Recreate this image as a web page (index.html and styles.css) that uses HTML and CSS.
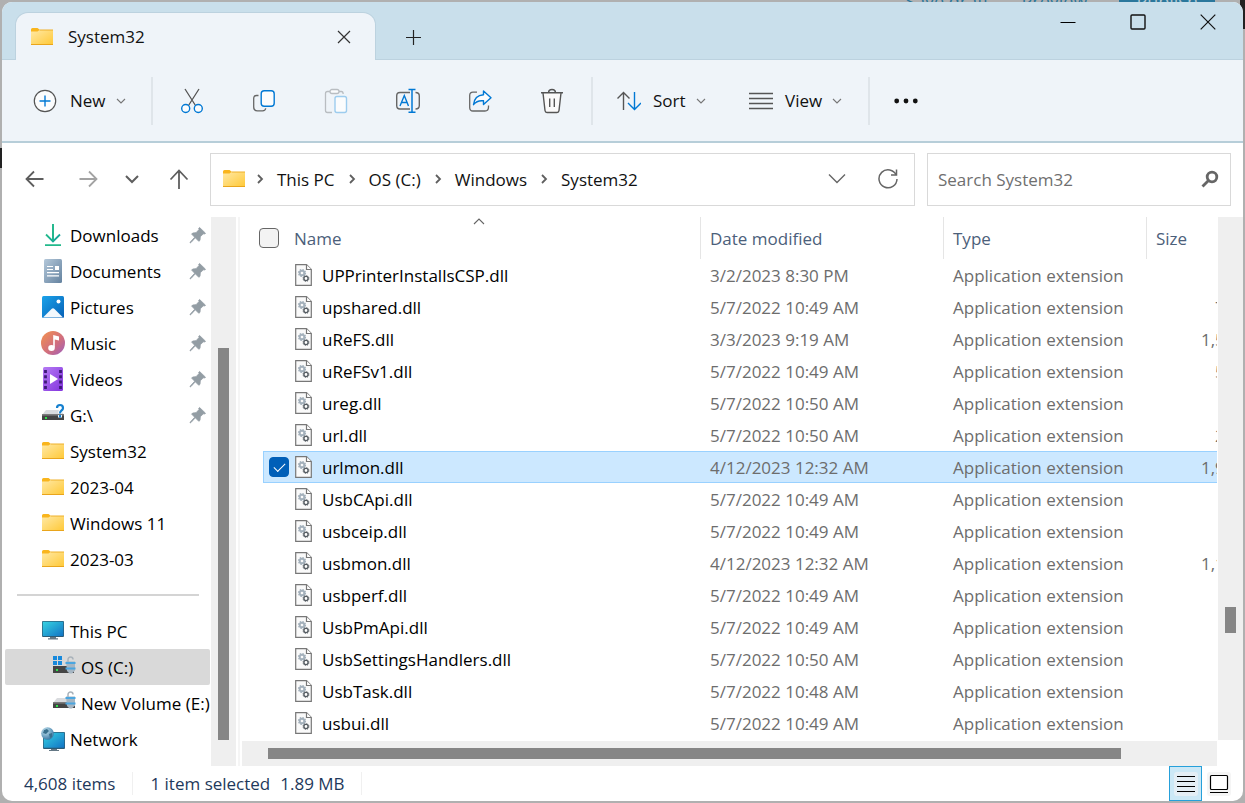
FILE: index.html
```
<!DOCTYPE html>
<html lang="en">

<head>
    <meta charset="UTF-8">
    <meta name="viewport" content="width=device-width, initial-scale=1.0">
    <title>System32</title>
    <link rel="stylesheet" href="styles.css">
</head>

<body>
    <!-- shared icons -->
    <svg class="sprite" width="0" height="0" aria-hidden="true">
        <defs>
            <linearGradient id="gFolder" x1="0" y1="0" x2="1" y2="1">
                <stop offset="0" stop-color="#ffe9a6" />
                <stop offset="1" stop-color="#ffc938" />
            </linearGradient>
            <linearGradient id="gScreen" x1="0" y1="0" x2="1" y2="1">
                <stop offset="0" stop-color="#36d3e2" />
                <stop offset="1" stop-color="#1173c4" />
            </linearGradient>
            <linearGradient id="gDown" x1="0" y1="0" x2="1" y2="1">
                <stop offset="0" stop-color="#2fc981" />
                <stop offset="1" stop-color="#0f9fa0" />
            </linearGradient>
            <linearGradient id="gDoc" x1="0" y1="0" x2="1" y2="1">
                <stop offset="0" stop-color="#b4c8da" />
                <stop offset="1" stop-color="#64829f" />
            </linearGradient>
            <linearGradient id="gPic" x1="0" y1="0" x2="1" y2="1">
                <stop offset="0" stop-color="#1ba3ea" />
                <stop offset="1" stop-color="#0660b6" />
            </linearGradient>
            <linearGradient id="gMusic" x1="0" y1="0" x2="1" y2="1">
                <stop offset="0.1" stop-color="#ee8c55" />
                <stop offset="0.6" stop-color="#cf6d80" />
                <stop offset="1" stop-color="#9c60c0" />
            </linearGradient>
            <linearGradient id="gVideo" x1="0" y1="0" x2="1" y2="1">
                <stop offset="0" stop-color="#b57bf4" />
                <stop offset="1" stop-color="#8334dd" />
            </linearGradient>
            <radialGradient id="gGlobe" cx="0.35" cy="0.3" r="0.8">
                <stop offset="0" stop-color="#c6e6f2" />
                <stop offset="1" stop-color="#2c6d9c" />
            </radialGradient>
        </defs>
        <symbol id="folder" viewBox="0 0 24 20">
            <path d="M1 2.500Q1 1 2.500 1H7.500L9.500 2.500V6H1z" fill="#f9b51d" />
            <path d="M1 4.500H7.500L9.500 3H23V17.500H1z" fill="url(#gFolder)" />
            <path d="M9.500 3H23" stroke="#eeb02a" />
            <path d="M1 17.500H23" stroke="#e9a51c" />
        </symbol>
        <symbol id="pin" viewBox="0 0 18 18">
            <path d="M10.600 1.500L16.500 7.200L15.600 8.100L14.300 7.800L11.300 10.800L11 14.300L9.800 15.300L6.300 11.800L2 16.500L1 17L1.400 15.900L5.700 11.200L2.600 8.100L3.700 7L7 6.700L10 3.600L9.700 2.300z" fill="#939da4" stroke="#939da4" stroke-width=".8" />
        </symbol>
        <symbol id="down" viewBox="0 0 12 12">
            <path d="M2 4L6 8L10 4" fill="none" stroke="#777" stroke-width="1.100" />
        </symbol>
        <symbol id="crumb" viewBox="0 0 10 12">
            <path d="M3 2L7 6L3 10" fill="none" stroke="#5f5f5f" stroke-width="1.800" />
        </symbol>
        <symbol id="dll" viewBox="0 0 17 22">
            <path d="M.7.7H11.500L16.300 5.500V21.300H.7z" fill="#fafafa" stroke="#777" stroke-width="1.200" />
            <path d="M11.500.7V5.500H16.300" fill="#fff" stroke="#777" stroke-width="1.200" />
            <circle cx="7" cy="9" r="2.300" fill="none" stroke="#a3b0bb" stroke-width="1.900" />
            <circle cx="7" cy="9" r="3.500" fill="none" stroke="#a3b0bb" stroke-width="1.200" stroke-dasharray="1.500 1.250" />
            <circle cx="11" cy="14.500" r="2.100" fill="#fff" stroke="#545b61" stroke-width="1.400" />
            <circle cx="11" cy="14.500" r="3" fill="none" stroke="#545b61" stroke-width=".8" stroke-dasharray="1.200 1.150" />
        </symbol>
        <symbol id="drive" viewBox="0 0 24 10">
            <path d="M5 0H20L23 5H1z" fill="#d9dbde" />
            <path d="M1 4.500H23V10H1z" fill="#444" />
            <path d="M1 4.500H23V6H1z" fill="#666" />
            <rect x="4" y="7" width="2" height="2" fill="#2fe04b" />
        </symbol>
        <symbol id="lock" viewBox="0 0 11 18">
            <path d="M3 6V3.500A2.500 2.500 0 0 1 8 3.500" fill="none" stroke="#aab3bb" stroke-width="1.500" />
            <path d="M1 5.500H10V14.500L7 17.500H4.500L2 15z" fill="#a5b5c2" />
            <path d="M.5 6H10.500V8H.5zM.5 11.500H10.500V13.500H.5z" fill="#4ba6e0" />
        </symbol>
    </svg>

    <div class="behind" aria-hidden="true">
        <span>Save draft</span>
        <span>Preview</span>
        <span class="behind-publish">Publish</span>
    </div>

    <div class="window">
        <header class="titlebar">
            <div class="tab">
                <svg class="folder"><use href="#folder" /></svg>
                <span class="tab-title">System32</span>
                <button class="tab-close" aria-label="Close tab">
                    <svg width="14" height="14" viewBox="0 0 14 14"><path d="M1 1L13 13M13 1L1 13" fill="none" stroke="#333" stroke-width="1.200" /></svg>
                </button>
            </div>
            <button class="tab-new" aria-label="New tab">
                <svg width="15" height="15" viewBox="0 0 15 15"><path d="M7.500 0V15M0 7.500H15" stroke="#222" stroke-width="1.200" /></svg>
            </button>
            <div class="caption">
                <button aria-label="Minimize">
                    <svg width="16" height="16" viewBox="0 0 16 16"><path d="M.5 8.500H15.500" stroke="#000" /></svg>
                </button>
                <button aria-label="Maximize">
                    <svg width="16" height="16" viewBox="0 0 16 16"><rect x="1" y="1" width="14" height="14" rx="1" fill="none" stroke="#111" stroke-width="1.400" /></svg>
                </button>
                <button aria-label="Close">
                    <svg width="16" height="16" viewBox="0 0 16 16"><path d="M.7.7L15.300 15.300M15.300.7L.7 15.300" stroke="#111" stroke-width="1.200" /></svg>
                </button>
            </div>
        </header>

        <div class="toolbar">
            <button class="tool-new">
                <svg width="24" height="24" viewBox="0 0 24 24" fill="none">
                    <circle cx="12" cy="12" r="10.700" fill="#fbfcfd" stroke="#555" stroke-width="1.200" />
                    <path d="M12 6.500V17.500M6.500 12H17.500" stroke="#0078d4" stroke-width="1.400" />
                </svg>
                <span>New</span>
                <svg class="chev"><use href="#down" /></svg>
            </button>
            <i class="sep"></i>
            <button class="tool" aria-label="Cut">
                <svg width="24" height="26" viewBox="0 0 24 26" fill="none">
                    <path d="M5 1L15.500 17.500M19 1L8.500 17.500" stroke="#555" stroke-width="1.300" />
                    <circle cx="5.700" cy="20.500" r="4" fill="#fbfcfd" stroke="#0078d4" stroke-width="1.400" />
                    <circle cx="18.300" cy="20.500" r="4" fill="#fbfcfd" stroke="#0078d4" stroke-width="1.400" />
                </svg>
            </button>
            <button class="tool" aria-label="Copy">
                <svg width="24" height="24" viewBox="0 0 24 24" fill="none">
                    <path d="M6.500 6.500H4.500Q1.700 6.500 1.700 9.500V18Q1.700 21.800 5.500 21.800H10.500Q13.500 21.800 13.700 19.300" stroke="#666" stroke-width="1.300" />
                    <rect x="9.200" y="1.700" width="13" height="15.500" rx="3" fill="#fbfcfd" stroke="#0078d4" stroke-width="1.400" />
                </svg>
            </button>
            <button class="tool" aria-label="Paste" disabled>
                <svg width="24" height="26" viewBox="0 0 24 26" fill="none">
                    <path d="M6 3.500H3.500Q1.500 3.500 1.500 5.500V22.500Q1.500 24.500 3.500 24.500H8M15 3.500H17.500Q19 3.500 19.200 6" stroke="#b9bdc1" stroke-width="1.300" />
                    <rect x="6" y="1.500" width="9" height="4" rx="2" fill="#fbfcfd" stroke="#b9bdc1" stroke-width="1.300" />
                    <rect x="11" y="8.500" width="11.500" height="16" rx="2" fill="#fbfcfd" stroke="#9dccee" stroke-width="1.400" />
                </svg>
            </button>
            <button class="tool" aria-label="Rename">
                <svg width="26" height="26" viewBox="0 0 26 26" fill="none">
                    <path d="M15 4.500H5Q1.700 4.500 1.700 8V17.500Q1.700 21 5 21H15M20.500 4.500Q24.300 4.500 24.300 8V17.500Q24.300 21 20.500 21" stroke="#666" stroke-width="1.400" />
                    <path d="M5 18L9.300 7.500L13.500 18M6.500 14.500H12" stroke="#0078d4" stroke-width="1.400" />
                    <path d="M17 2V23.500M13.500 1.500H20.500M13.500 24.300H20.500" stroke="#0078d4" stroke-width="1.500" />
                </svg>
            </button>
            <button class="tool" aria-label="Share">
                <svg width="24" height="24" viewBox="0 0 24 24" fill="none">
                    <path d="M9 3.200H5Q1.700 3.200 1.700 6.500V18.500Q1.700 22 5 22H17Q20.500 22 20.500 18V16.500" stroke="#666" stroke-width="1.300" />
                    <path d="M15.500 2L23 8.700L15.500 15.500V11.800Q9 11 5.500 15.700Q6.500 6.300 15.500 5.700z" fill="#fbfcfd" stroke="#0078d4" stroke-width="1.400" stroke-linejoin="round" />
                </svg>
            </button>
            <button class="tool" aria-label="Delete">
                <svg width="24" height="26" viewBox="0 0 24 26" fill="none">
                    <path d="M3 5L5 22.500Q5.200 24.500 7 24.500H17Q18.800 24.500 19 22.500L21 5" fill="#fbfafa" stroke="#555" stroke-width="1.400" />
                    <path d="M1 4.700H23M8.500 4.500Q8.700 1.500 12 1.500Q15.300 1.500 15.500 4.500M9.700 10.500V19M14.300 10.500V19" stroke="#555" stroke-width="1.400" />
                </svg>
            </button>
            <i class="sep"></i>
            <button class="tool-text tool-sort">
                <svg width="24" height="20" viewBox="0 0 24 20" fill="none">
                    <path d="M6.500 19V1.500M.5 7.500L6.500 1.500L12.500 7.500" stroke="#555" stroke-width="1.400" />
                    <path d="M17.500 1V18.500M11 12L17.500 18.500L24 12" stroke="#0078d4" stroke-width="1.400" />
                </svg>
                <span>Sort</span>
                <svg class="chev"><use href="#down" /></svg>
            </button>
            <button class="tool-text tool-view">
                <svg width="24" height="18" viewBox="0 0 24 18"><path d="M0 1.500H24M0 6.500H24M0 11.500H24M0 16.500H24" stroke="#555" stroke-width="1.400" /></svg>
                <span>View</span>
                <svg class="chev"><use href="#down" /></svg>
            </button>
            <i class="sep"></i>
            <button class="tool" aria-label="See more">
                <svg width="24" height="6" viewBox="0 0 24 6" fill="#111">
                    <circle cx="2.700" cy="3" r="2.400" />
                    <circle cx="12" cy="3" r="2.400" />
                    <circle cx="21.300" cy="3" r="2.400" />
                </svg>
            </button>
        </div>

        <div class="navrow">
            <button class="nav-wide" aria-label="Back">
                <svg width="20" height="18" viewBox="0 0 20 18" fill="none"><path d="M18.500 9H1.500M9 1.500L1.500 9L9 16.500" stroke="#5e5e5e" stroke-width="1.800" /></svg>
            </button>
            <button class="nav-wide" aria-label="Forward">
                <svg width="20" height="18" viewBox="0 0 20 18" fill="none"><path d="M1.500 9H18.500M11 1.500L18.500 9L11 16.500" stroke="#a3a3a3" stroke-width="1.800" /></svg>
            </button>
            <button class="nav-recent" aria-label="Recent locations">
                <svg width="14" height="10" viewBox="0 0 14 10" fill="none"><path d="M1 2L7 8L13 2" stroke="#5e5e5e" stroke-width="2" /></svg>
            </button>
            <button class="nav-up" aria-label="Up">
                <svg width="20" height="20" viewBox="0 0 20 20" fill="none"><path d="M10 20V1.500M1.500 10.500L10 1.500L18.500 10.500" stroke="#5e5e5e" stroke-width="1.800" /></svg>
            </button>
            <nav class="address">
                <svg class="folder"><use href="#folder" /></svg>
                <svg class="crumb"><use href="#crumb" /></svg>
                <a href="#">This PC</a>
                <svg class="crumb"><use href="#crumb" /></svg>
                <a href="#">OS (C:)</a>
                <svg class="crumb"><use href="#crumb" /></svg>
                <a href="#">Windows</a>
                <svg class="crumb"><use href="#crumb" /></svg>
                <a href="#">System32</a>
                <button class="addr-btn addr-history" aria-label="Previous locations">
                    <svg width="18" height="12" viewBox="0 0 18 12" fill="none"><path d="M1 1.500L9 9.500L17 1.500" stroke="#666" stroke-width="1.400" /></svg>
                </button>
                <button class="addr-btn" aria-label="Refresh">
                    <svg width="20" height="20" viewBox="0 0 20 20" fill="none"><path d="M18.300 6.300A9 9 0 1 0 19 10M18.500 .5V6H13" stroke="#666" stroke-width="1.500" /></svg>
                </button>
            </nav>
            <div class="search">
                <input type="search" placeholder="Search System32" aria-label="Search System32">
                <svg width="18" height="18" viewBox="0 0 18 18" fill="none">
                    <circle cx="11" cy="7" r="4.800" stroke="#666" stroke-width="2.800" />
                    <path d="M7.500 10.500L1.500 16.500" stroke="#666" stroke-width="2.800" />
                </svg>
            </div>
        </div>

        <div class="content">
            <nav class="sidebar">
                <ul>
                    <li><a href="#">
                            <svg width="24" height="24" viewBox="0 0 24 24" fill="none">
                                <path d="M12 1V18M5 11.500L12 18.500L19 11.500" stroke="url(#gDown)" stroke-width="1.800" />
                                <path d="M11.200 1H12.800V18H11.200z" fill="#20b68c" />
                                <path d="M4 22.200H20" stroke="#22b98b" stroke-width="1.800" />
                            </svg>Downloads</a><svg class="pin"><use href="#pin" /></svg></li>
                    <li><a href="#">
                            <svg width="24" height="24" viewBox="0 0 24 24">
                                <rect x="3" y="0" width="18" height="24" rx="1.500" fill="url(#gDoc)" />
                                <path d="M6 7.500H12M6 10.500H12M6 13.700H18M6 16.800H18" stroke="#fff" stroke-width="1.200" />
                                <rect x="14" y="7" width="4" height="4" fill="#fff" />
                            </svg>Documents</a><svg class="pin"><use href="#pin" /></svg></li>
                    <li><a href="#">
                            <svg width="24" height="24" viewBox="0 0 24 24">
                                <rect x="1" y="1" width="22" height="22" rx="1.500" fill="url(#gPic)" />
                                <path d="M2 22.500L10.500 14Q12 12.600 13.500 14L22 22.500z" fill="#f2f8fd" />
                                <circle cx="17.500" cy="6.500" r="2" fill="#fff" />
                            </svg>Pictures</a><svg class="pin"><use href="#pin" /></svg></li>
                    <li><a href="#">
                            <svg width="24" height="24" viewBox="0 0 24 24">
                                <circle cx="12" cy="12" r="12" fill="url(#gMusic)" />
                                <path d="M12.200 4L18 5.500V9.500L13.800 8.500V16.500H12.200z" fill="#fff" />
                                <ellipse cx="10.500" cy="17" rx="3.300" ry="3" fill="#fff" />
                            </svg>Music</a><svg class="pin"><use href="#pin" /></svg></li>
                    <li><a href="#">
                            <svg width="24" height="24" viewBox="0 0 24 24">
                                <rect x="2" y="0" width="20" height="24" rx="1.500" fill="url(#gVideo)" />
                                <path d="M4.500 3V22M19.500 3V22" stroke="#3d1a78" stroke-width="2.800" stroke-dasharray="3 2.300" />
                                <path d="M9 7L17 12L9 17z" fill="#fff" />
                            </svg>Videos</a><svg class="pin"><use href="#pin" /></svg></li>
                    <li><a href="#">
                            <svg width="24" height="24" viewBox="0 0 24 24" fill="none">
                                <use href="#drive" y="7" width="24" height="10" />
                                <path d="M16 5Q16 2 19 2Q22 2 22 5Q22 6.500 20.500 7.500Q19 8.500 19 10.500M19 12V14.500" stroke="#fff" stroke-width="4" />
                                <path d="M16 5Q16 2 19 2Q22 2 22 5Q22 6.500 20.500 7.500Q19 8.500 19 10.500M19 12V14.500" stroke="#1580cf" stroke-width="2.200" />
                            </svg>G:\</a><svg class="pin"><use href="#pin" /></svg></li>
                    <li><a href="#"><svg class="folder"><use href="#folder" /></svg>System32</a></li>
                    <li><a href="#"><svg class="folder"><use href="#folder" /></svg>2023-04</a></li>
                    <li><a href="#"><svg class="folder"><use href="#folder" /></svg>Windows 11</a></li>
                    <li><a href="#"><svg class="folder"><use href="#folder" /></svg>2023-03</a></li>
                </ul>
                <hr>
                <ul>
                    <li><a href="#">
                            <svg width="24" height="24" viewBox="0 0 24 24">
                                <rect x="1" y="2" width="22" height="16" rx="1" fill="#2c5b75" />
                                <rect x="1.700" y="2.700" width="20.600" height="14.300" fill="url(#gScreen)" />
                                <path d="M9 18H15V19.200H17V20.500H7V19.200H9z" fill="#657885" />
                            </svg>This PC</a></li>
                    <li class="child selected"><a href="#">
                            <svg width="24" height="24" viewBox="0 0 24 24">
                                <path d="M1 1H5V5H1zM6 1H10V5H6zM1 6H5V10H1zM6 6H10V10H6z" fill="#1789dc" />
                                <path d="M1 11H22V18H1z" fill="#454545" />
                                <rect x="4" y="14" width="2" height="2" fill="#2fe04b" />
                                <use href="#lock" x="13" y="1" width="11" height="18" />
                            </svg>OS (C:)</a></li>
                    <li class="child"><a href="#">
                            <svg width="24" height="24" viewBox="0 0 24 24">
                                <use href="#drive" y="7" width="24" height="10" />
                                <use href="#lock" x="13" y="0" width="11" height="18" />
                            </svg>New Volume (E:)</a></li>
                    <li><a href="#">
                            <svg width="24" height="24" viewBox="0 0 24 24">
                                <rect x="2" y="5" width="22" height="17" rx="1" fill="#2c5b75" />
                                <rect x="2.700" y="5.700" width="20.600" height="15" fill="url(#gScreen)" />
                                <path d="M10 22H16V23H18V24H8V23H10z" fill="#657885" />
                                <circle cx="6.500" cy="6.500" r="6.300" fill="url(#gGlobe)" />
                                <path d="M3 3L6 2L8 4L5 7L2 6zM8 7L11 6V10L9 11z" fill="#386f8c" />
                            </svg>Network</a></li>
                </ul>
            </nav>
            <div class="vscroll side-scroll"><div class="thumb"></div></div>
            <div class="splitter"></div>

            <main class="files">
                <div class="table-wrap">
                    <table>
                        <thead>
                            <tr>
                                <th class="c-name">
                                    <div class="cell">
                                        <input type="checkbox" class="check" aria-label="Select all">
                                        <span>Name</span>
                                    </div>
                                    <svg class="sort-mark" width="12" height="7" viewBox="0 0 12 7"><path d="M1 6L6 1L11 6" fill="none" stroke="#666" stroke-width="1.100" /></svg>
                                </th>
                                <th class="c-date">Date modified</th>
                                <th class="c-type">Type</th>
                                <th class="c-size">Size</th>
                            </tr>
                        </thead>
                        <tbody id="rows"></tbody>
                    </table>
                </div>
                <div class="hscroll"><div class="thumb"></div></div>
            </main>
            <div class="vscroll file-scroll"><div class="thumb"></div></div>
        </div>

        <footer class="status">
            <span class="count">4,608 items</span>
            <span class="picked">1 item selected</span>
            <span class="bytes">1.89 MB</span>
            <button class="mode active" aria-label="Details view">
                <svg width="24" height="24" viewBox="0 0 24 24"><rect width="24" height="24" rx="3" fill="#e4eef5" /><path d="M3 4.500H21M3 9.500H21M3 14.500H21M3 19.500H21" stroke="#000" /></svg>
            </button>
            <button class="mode" aria-label="Large icons view">
                <svg width="24" height="24" viewBox="0 0 24 24"><rect width="24" height="24" rx="3" fill="#f5f5f5" /><rect x="3.500" y="3.500" width="17" height="14" rx="1" fill="#fff" stroke="#000" stroke-width="1.200" /><path d="M3 20.500H21" stroke="#000" /></svg>
            </button>
        </footer>
    </div>

    <script src="files.js"></script>
</body>

</html>
```
FILE: styles.css
```
* {
    box-sizing: border-box;
}

body {
    margin: 0;
    height: 100vh;
    padding: 2px;
    font-family: "Open Sans", "Noto Sans", sans-serif;
    font-size: 17px;
    color: #111;
    background: linear-gradient(#222, #222) 0 148px / 2px 20px no-repeat,
        linear-gradient(#222, #222) 100% 0 / 5px 29px no-repeat,
        #b0b0b0;
}

.sprite {
    position: absolute;
}

/* strip of the page behind the window */
.behind {
    position: absolute;
    top: 0;
    left: 0;
    right: 30px;
    height: 2px;
    overflow: hidden;
    display: flex;
    justify-content: flex-end;
    gap: 32px;
    font-size: 18px;
    line-height: 2px;
    color: #2a779c;
}

.behind-publish {
    padding: 0 17px;
    color: #b7c8d0;
    background: #2a779c;
}

button {
    display: flex;
    align-items: center;
    justify-content: center;
    padding: 0;
    border: none;
    background: none;
    font: inherit;
    color: inherit;
}

a {
    color: inherit;
    text-decoration: none;
}

svg {
    flex: none;
}

.window {
    position: relative;
    display: flex;
    flex-direction: column;
    height: 100%;
    border-radius: 10px;
    overflow: hidden;
    background: #fff;
}

.folder {
    width: 24px;
    height: 20px;
}

/* title bar */
.titlebar {
    display: flex;
    height: 58px;
    padding-left: 14px;
    background: #c9dfeb;
    box-shadow: inset 0 -1px #bcd2df;
}

.tab {
    display: flex;
    align-items: center;
    width: 359px;
    margin-top: 11px;
    padding: 0 24px 0 14px;
    border-radius: 12px 12px 0 0;
    background: #eff4f9;
    box-shadow: 0 0 0 1px #bcd2df;
    clip-path: inset(-2px -2px 0 -2px);
}

.tab-title {
    flex: 1;
    margin-left: 14px;
    font-weight: 500;
}

.tab-new {
    width: 77px;
    padding-top: 12px;
}

.caption {
    display: flex;
    margin-left: auto;
    height: 40px;
}

.caption button {
    width: 70px;
}

/* toolbar */
.toolbar {
    display: flex;
    align-items: center;
    height: 83px;
    background: #eff4f9;
    border-bottom: 2px solid #b7ced9;
}

.tool-new {
    width: 149px;
    justify-content: flex-start;
    padding-left: 31px;
    gap: 13px;
}

.tool {
    width: 72px;
    height: 48px;
}

.tool-text {
    justify-content: flex-start;
    padding-left: 21px;
    gap: 12px;
}

.tool-sort {
    width: 132px;
}

.tool-view {
    width: 140px;
}

.tool-new .chev {
    margin-left: -4px;
}

.tool-text .chev {
    margin-left: -3px;
}

.chev {
    width: 12px;
    height: 12px;
}

.sep {
    width: 2px;
    height: 48px;
    margin: 0 3px 0 0;
    background: #dfe5ea;
}

.tool + .sep {
    margin-left: 3px;
}

.tool-view + .sep {
    margin-right: 0;
}

/* address row */
.navrow {
    display: flex;
    align-items: center;
    height: 72px;
    padding: 0 12px 0 6px;
}

.navrow > button {
    height: 40px;
}

.nav-wide {
    width: 53px;
}

.nav-recent {
    width: 36px;
}

.nav-up {
    width: 58px;
}

.address {
    flex: 1;
    display: flex;
    align-items: center;
    height: 53px;
    margin-left: 2px;
    padding: 0 11px;
    border: 1px solid #d9d9d9;
}

.crumb {
    width: 10px;
    height: 12px;
    margin: 0 12px;
}

.address .folder + .crumb {
    margin-left: 9px;
}

.addr-btn {
    width: 30px;
    height: 40px;
}

.addr-history {
    margin-left: auto;
    margin-right: 21px;
}

.search {
    display: flex;
    align-items: center;
    width: 304px;
    height: 53px;
    margin-left: 12px;
    padding: 0 11px 0 10px;
    border: 1px solid #d9d9d9;
}

.search input {
    flex: 1;
    min-width: 0;
    padding: 0;
    border: none;
    outline: none;
    background: none;
    font: inherit;
}

.search input::placeholder {
    color: #6f6f6f;
}

/* content */
.content {
    flex: 1;
    display: flex;
    min-height: 0;
    padding-top: 2px;
}

.sidebar {
    width: 209px;
    overflow: hidden;
    white-space: nowrap;
    color: #000;
}

.sidebar ul {
    margin: 0;
    padding: 0;
    list-style: none;
}

.sidebar li {
    display: flex;
    align-items: center;
    height: 36px;
    margin: 0 1px 0 3px;
    padding: 0 3px 0 36px;
    border-radius: 2px;
}

.sidebar li a {
    flex: 1;
    display: flex;
    align-items: center;
    gap: 5px;
}

.sidebar li.child {
    padding: 0 0 0 47px;
}

.sidebar li.selected {
    background: #d9d9d9;
}

.pin {
    width: 18px;
    height: 18px;
}

.sidebar hr {
    height: 2px;
    margin: 17px 12px 17px 15px;
    border: none;
    background: #d4d4d4;
}

.vscroll {
    width: 25px;
    padding: 0 7px;
    background: #efefef;
}

.thumb {
    background: #868686;
}

.side-scroll .thumb {
    height: 392px;
    margin-top: 131px;
}

.file-scroll {
    margin-bottom: 26px;
}

.file-scroll .thumb {
    height: 26px;
    margin-top: 390px;
}

.splitter {
    width: 2px;
    margin: 0 2px;
    background: #f5f5f5;
}

.files {
    flex: 1;
    min-width: 0;
    display: flex;
    flex-direction: column;
    margin-right: 1px;
}

.table-wrap {
    flex: 1;
    min-height: 0;
    overflow: hidden;
    padding-left: 21px;
}

table {
    table-layout: fixed;
    width: 1017px;
    border-spacing: 0;
    white-space: nowrap;
}

th {
    position: relative;
    height: 42px;
    padding: 0 9px;
    text-align: left;
    font-weight: 400;
    color: #4c607a;
    border-left: 1px solid #e5e5e5;
}

th.c-name {
    width: 437px;
    padding: 0;
    border: none;
}

.c-date {
    width: 243px;
}

.c-type {
    width: 203px;
}

.cell {
    display: flex;
    align-items: center;
}

th .cell {
    gap: 15px;
    margin-left: -4px;
}

.sort-mark {
    position: absolute;
    top: 1px;
    left: 210px;
}

td {
    height: 32px;
    padding: 0 10px;
    color: #6d6d6d;
}

td.c-name {
    padding: 0 0 0 6px;
    color: #000;
}

td.c-size {
    text-align: right;
}

td .check {
    margin-right: 6px;
    opacity: 0;
}

td .check:checked {
    opacity: 1;
}

td label {
    margin-left: 10px;
}

.dll {
    width: 17px;
    height: 22px;
}

tr.selected td {
    background: #cce8ff;
    border: solid #99d1ff;
    border-width: 1px 0;
}

tr.selected td.c-name {
    border-left-width: 1px;
    padding-left: 5px;
}

.check {
    appearance: none;
    flex: none;
    width: 20px;
    height: 20px;
    margin: 0;
    border: 1px solid #666;
    border-radius: 4px;
    background: #f3f3f3;
}

.check:checked {
    border-color: #005fb8;
    background: #005fb8;
    display: grid;
    place-items: center;
}

.check:checked::after {
    content: "";
    width: 10px;
    height: 5px;
    margin-top: -3px;
    border: solid #fff;
    border-width: 0 0 1px 1px;
    transform: rotate(-45deg);
}

.hscroll {
    height: 25px;
    padding: 7px 96px 7px 26px;
    background: #efefef;
}

.hscroll .thumb {
    height: 11px;
}

/* status bar */
.status {
    display: flex;
    align-items: center;
    height: 35px;
    padding: 0 8px 0 22px;
    color: #1e395b;
}

.count {
    padding-right: 17px;
    margin-right: 17px;
    border-right: 1px solid #f0f0f0;
}

.bytes {
    margin: 0 auto 0 10px;
    padding-right: 16px;
    border-right: 1px solid #f0f0f0;
}

.mode {
    width: 33px;
    height: 35px;
}

.mode.active {
    border: 1px solid #26a0da;
    background: #cce8f6;
}
```
FILE: files.js
```
var files = [
    ["UPPrinterInstallsCSP.dll", "3/2/2023 8:30 PM", ""],
    ["upshared.dll", "5/7/2022 10:49 AM", "732 KB"],
    ["uReFS.dll", "3/3/2023 9:19 AM", "1,524 KB"],
    ["uReFSv1.dll", "5/7/2022 10:49 AM", "548 KB"],
    ["ureg.dll", "5/7/2022 10:50 AM", ""],
    ["url.dll", "5/7/2022 10:50 AM", "236 KB"],
    ["urlmon.dll", "4/12/2023 12:32 AM", "1,936 KB"],
    ["UsbCApi.dll", "5/7/2022 10:49 AM", ""],
    ["usbceip.dll", "5/7/2022 10:49 AM", ""],
    ["usbmon.dll", "4/12/2023 12:32 AM", "1,112 KB"],
    ["usbperf.dll", "5/7/2022 10:49 AM", ""],
    ["UsbPmApi.dll", "5/7/2022 10:49 AM", ""],
    ["UsbSettingsHandlers.dll", "5/7/2022 10:50 AM", ""],
    ["UsbTask.dll", "5/7/2022 10:48 AM", ""],
    ["usbui.dll", "5/7/2022 10:49 AM", ""]
];
var selectedFile = "urlmon.dll";

var html = "";
for (let i = 0; i < files.length; i++) {
    let picked = files[i][0] == selectedFile;
    html += '<tr' + (picked ? ' class="selected"' : '') + '>' +
        '<td class="c-name"><div class="cell">' +
        '<input type="checkbox" class="check" id="file' + i + '"' + (picked ? ' checked' : '') + '>' +
        '<svg class="dll"><use href="#dll" /></svg>' +
        '<label for="file' + i + '">' + files[i][0] + '</label></div></td>' +
        '<td>' + files[i][1] + '</td>' +
        '<td>Application extension</td>' +
        '<td class="c-size">' + files[i][2] + '</td></tr>';
}
document.getElementById("rows").innerHTML = html;
```
